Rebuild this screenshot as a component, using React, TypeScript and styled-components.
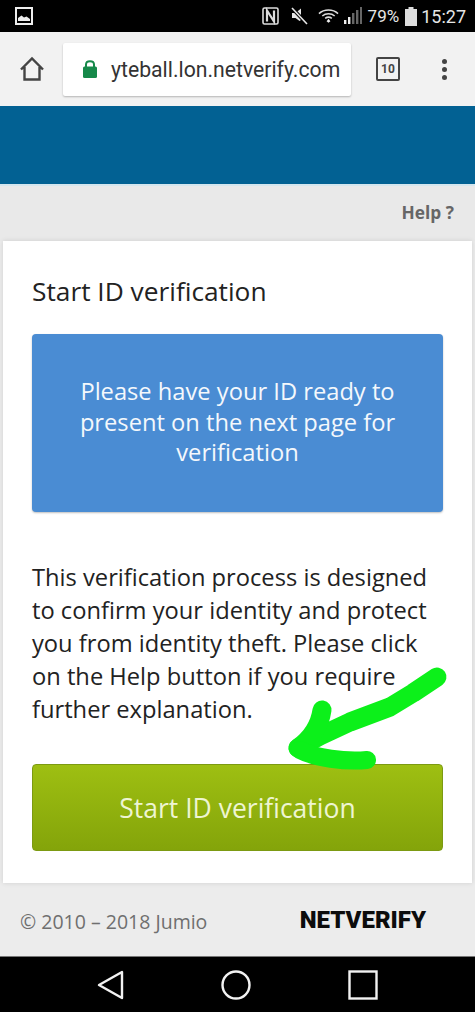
import * as React from "react";
import styled, { createGlobalStyle } from "styled-components";

const GlobalStyle = createGlobalStyle`
  html, body {
    margin: 0;
    padding: 0;
    background: #ececec;
  }
  * {
    box-sizing: border-box;
  }
`;

const Screen = styled.div`
  position: relative;
  width: 475px;
  height: 1012px;
  display: flex;
  flex-direction: column;
  overflow: hidden;
  font-family: "Open Sans", "Liberation Sans", sans-serif;
  background: #ececec;
`;

const StatusBar = styled.div`
  height: 32px;
  background: #000;
  color: #e6e6e6;
  display: flex;
  align-items: center;
  padding: 0 9px 0 15px;
  font-family: Roboto, sans-serif;
  font-size: 17px;
`;

const StatusRight = styled.div`
  margin-left: auto;
  display: flex;
  align-items: center;
`;

const StatusItem = styled.span<{ $after: number }>`
  display: flex;
  margin-right: ${(p) => p.$after}px;
`;

const StatusClock = styled.span`
  font-size: 18px;
`;

const BrowserBar = styled.div`
  height: 74px;
  background: #f2f2f2;
  display: flex;
  align-items: center;
  padding: 0 21px 0 19px;
`;

const AddressBox = styled.div`
  width: 288px;
  height: 53px;
  margin-left: 18px;
  background: #fff;
  border-radius: 2px;
  box-shadow: 0 1px 2px rgba(0, 0, 0, 0.25);
  display: flex;
  align-items: center;
  padding-left: 19px;
  gap: 13px;
  font-family: Roboto, sans-serif;
  font-size: 21.2px;
  color: #333;
  white-space: nowrap;
`;

const TabCount = styled.div`
  margin-left: 25px;
  width: 24px;
  height: 24px;
  border: 2px solid #444;
  border-radius: 2px;
  font-family: Roboto, sans-serif;
  font-weight: bold;
  font-size: 12px;
  color: #444;
  display: flex;
  align-items: center;
  justify-content: center;
`;

const MenuDots = styled.div`
  margin-left: auto;
  display: flex;
  flex-direction: column;
  gap: 3px;
  margin-right: 7px;
`;

const Dot = styled.span`
  width: 5px;
  height: 5px;
  border-radius: 50%;
  background: #444;
`;

const Banner = styled.div`
  height: 80px;
  background: #026193;
  border-bottom: 2px solid #d4e6ee;
`;

const HelpBar = styled.div`
  height: 55px;
  background: #e9e9e9;
  display: flex;
  align-items: center;
  justify-content: flex-end;
  padding: 0 21px 2px 0;
  font-size: 17.3px;
  font-weight: 700;
  color: #666;
`;

const Card = styled.div`
  margin: 0 3px;
  height: 642px;
  background: #fff;
  padding: 0 29px;
  display: flex;
  flex-direction: column;
  box-shadow: 0 0 5px rgba(0, 0, 0, 0.12);
`;

const Title = styled.h1`
  margin: 31px 0 24px;
  font-size: 26.3px;
  line-height: 38px;
  font-weight: 400;
  color: #222;
`;

const Notice = styled.div`
  height: 178px;
  background: #4a8cd3;
  border-radius: 4px;
  box-shadow: 0 1px 2px rgba(0, 0, 0, 0.25);
  color: #f4f8fc;
  font-size: 23.7px;
  line-height: 30.5px;
  text-align: center;
  display: flex;
  align-items: center;
  justify-content: center;
  padding: 0 30px 2px;
`;

const Body = styled.p`
  margin: 49px 0 38px;
  font-size: 23.7px;
  line-height: 33px;
  color: #222;
`;

const StartButton = styled.button`
  height: 87px;
  width: 100%;
  border: 1px solid #7c9a12;
  border-radius: 4px;
  background: linear-gradient(#9ebf12, #84a40a);
  color: #eef5d2;
  font-family: inherit;
  font-size: 26.5px;
  padding: 0;
`;

const Footer = styled.div`
  height: 73px;
  display: flex;
  align-items: center;
  justify-content: space-between;
  padding: 4px 49px 0 20px;
  font-size: 19.5px;
  color: #6f6f6f;
`;

const Logo = styled.div`
  font-family: Roboto, sans-serif;
  font-size: 24px;
  font-weight: 900;
  line-height: 1;
  margin-top: -4px;
  color: #0c0c0c;
`;

const NavBar = styled.div`
  height: 56px;
  background: #000;
  border-top: 1px solid #777;
  display: flex;
  align-items: center;
  justify-content: center;
  gap: 97px;
`;

const Scribble = styled.svg`
  position: absolute;
  left: 280px;
  top: 660px;
`;

const GalleryIcon = () => (
  <svg width="18" height="18" viewBox="0 0 18 18">
    <rect x="1" y="1" width="16" height="16" fill="none" stroke="#eee" strokeWidth="2" />
    <path d="M3 14 V11 L6.5 8.5 L9 10.5 L11.5 9.5 L15 12 V14 Z" fill="#eee" />
  </svg>
);

const NfcIcon = () => (
  <svg width="17" height="18" viewBox="0 0 17 18">
    <rect x="1" y="1" width="15" height="16" rx="1.5" fill="none" stroke="#ddd" strokeWidth="1.6" />
    <path d="M5 14.5 V3.5 L12 14.5 V3.5" fill="none" stroke="#ddd" strokeWidth="2.2" />
  </svg>
);

const MuteIcon = () => (
  <svg width="17" height="18" viewBox="0 0 17 18">
    <path d="M1 6 H4.5 L10 1.5 V13 L8.5 14 L4.5 11 H1 Z" fill="#e6e6e6" />
    <path d="M1 1 L16 17" stroke="#000" strokeWidth="3.6" />
    <path d="M1 1 L16 17" stroke="#e6e6e6" strokeWidth="1.6" />
  </svg>
);

const WifiIcon = () => (
  <svg width="21" height="16" viewBox="0 0 22 16">
    <g fill="none" stroke="#dcdcdc" strokeWidth="1.6">
      <path d="M1 5.5 C6.5 0.5 15.5 0.5 21 5.5" />
      <path d="M4.5 8 C8 5 14 5 17.5 8" />
      <path d="M7.5 10.5 C9.5 9 12.5 9 14.5 10.5" />
    </g>
    <path d="M11 11 L13 13.5 L11 15 L9 13.5 Z" fill="#eee" />
  </svg>
);

const SignalIcon = () => (
  <svg width="18" height="18" viewBox="0 0 18 18">
    <rect x="0" y="13" width="2.4" height="4" fill="#eee" />
    <rect x="4" y="10" width="2.4" height="7" fill="#eee" />
    <rect x="8" y="6" width="2.4" height="11" fill="#666" />
    <rect x="12" y="3" width="2.4" height="14" fill="#666" />
    <rect x="16" y="0" width="2" height="17" fill="#666" />
  </svg>
);

const BatteryIcon = () => (
  <svg width="12" height="19" viewBox="0 0 12 19">
    <rect x="3.5" y="0" width="5" height="2" fill="#ddd" />
    <rect x="0" y="2" width="12" height="17" fill="#ddd" />
  </svg>
);

const HomeIcon = () => (
  <svg width="26" height="26" viewBox="0 0 26 26">
    <path d="M2 13.5 L13 2.5 L24 13.5 M5.5 11 V23.5 H20.5 V11" fill="none" stroke="#444" strokeWidth="2.4" />
  </svg>
);

const LockIcon = () => (
  <svg width="16" height="20" viewBox="0 0 16 20">
    <path d="M4 8 V5.5 C4 1 12 1 12 5.5 V8" fill="none" stroke="#16894a" strokeWidth="2" />
    <rect x="1" y="7.5" width="14" height="11.5" rx="1.5" fill="#16894a" />
  </svg>
);

const BackIcon = () => (
  <svg width="27" height="30" viewBox="0 0 27 30">
    <path d="M25 2 V28 L2 15 Z" fill="none" stroke="#f2f2f2" strokeWidth="2.4" strokeLinejoin="round" />
  </svg>
);

const CircleIcon = () => (
  <svg width="30" height="30" viewBox="0 0 30 30">
    <circle cx="15" cy="15" r="13.5" fill="none" stroke="#f2f2f2" strokeWidth="2.4" />
  </svg>
);

const SquareIcon = () => (
  <svg width="30" height="30" viewBox="0 0 30 30">
    <rect x="1.5" y="1.5" width="27" height="27" fill="none" stroke="#f2f2f2" strokeWidth="2.4" />
  </svg>
);

const GreenArrow = () => (
  <Scribble width="175" height="120" viewBox="0 0 175 120">
    <g fill="none" stroke="#0cf01a" strokeLinecap="round" strokeLinejoin="round">
      <path d="M157 17 L133 33 L110 47 L70 62 L40 76 L18 88" strokeWidth="19" />
      <path d="M42 50 C40 64 32 78 18 88" strokeWidth="19" />
      <path d="M20 90 C35 98 65 102 87 100" strokeWidth="18" />
    </g>
  </Scribble>
);

export default function App() {
  return (
    <Screen>
      <GlobalStyle />
      <StatusBar>
        <GalleryIcon />
        <StatusRight>
          <StatusItem $after={12}>
            <NfcIcon />
          </StatusItem>
          <StatusItem $after={10}>
            <MuteIcon />
          </StatusItem>
          <StatusItem $after={5}>
            <WifiIcon />
          </StatusItem>
          <StatusItem $after={6}>
            <SignalIcon />
          </StatusItem>
          <StatusItem $after={6}>79%</StatusItem>
          <StatusItem $after={4}>
            <BatteryIcon />
          </StatusItem>
          <StatusClock>15:27</StatusClock>
        </StatusRight>
      </StatusBar>
      <BrowserBar>
        <HomeIcon />
        <AddressBox>
          <LockIcon />
          yteball.lon.netverify.com
        </AddressBox>
        <TabCount>10</TabCount>
        <MenuDots>
          <Dot />
          <Dot />
          <Dot />
        </MenuDots>
      </BrowserBar>
      <Banner />
      <HelpBar>Help ?</HelpBar>
      <Card>
        <Title>Start ID verification</Title>
        <Notice>Please have your ID ready to present on the next page for verification</Notice>
        <Body>
          This verification process is designed to confirm your identity and protect you from
          identity theft. Please click on the Help button if you require further explanation.
        </Body>
        <StartButton>Start ID verification</StartButton>
      </Card>
      <Footer>
        <span>© 2010 – 2018 Jumio</span>
        <Logo>NETVERIFY</Logo>
      </Footer>
      <NavBar>
        <BackIcon />
        <CircleIcon />
        <SquareIcon />
      </NavBar>
      <GreenArrow />
    </Screen>
  );
}
